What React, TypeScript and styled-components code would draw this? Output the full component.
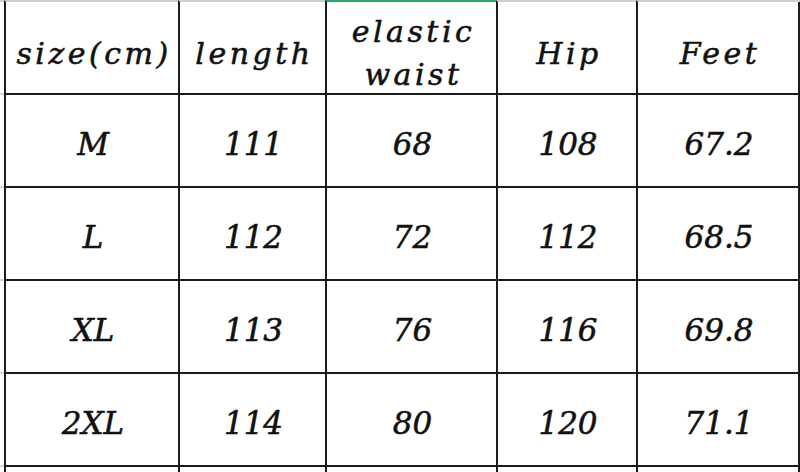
import React from "react";
import styled, { createGlobalStyle } from "styled-components";

const GlobalStyle = createGlobalStyle`
  html, body {
    margin: 0;
    padding: 0;
    background: #ffffff;
    overflow: hidden;
  }
  #root {
    width: 800px;
    height: 472px;
    overflow: hidden;
  }
`;

const COLS = [174, 147, 171, 140, 162];

const Sheet = styled.div`
  display: grid;
  grid-template-columns: 4px ${COLS.map((c) => `${c}px`).join(" ")} 2px;
  grid-template-rows: 95px repeat(4, 93px) 20px;
  width: 800px;
  font-family: "DejaVu Serif", "Liberation Serif", serif;
  font-style: italic;
  font-weight: 400;
  color: #111111;
  -webkit-text-stroke: 0.55px #111111;
`;

const Gutter = styled.div<{ $top?: boolean }>`
  box-sizing: border-box;
  border-top: ${(p) => (p.$top ? "2px solid #cfcfcf" : "none")};
  border-bottom: 2px solid #d6d6d6;
`;

const EdgeCell = styled.div<{ $top?: boolean }>`
  box-sizing: border-box;
  background: #1c1c1c;
  border-top: ${(p) => (p.$top ? "2px solid #cfcfcf" : "none")};
`;

const Cell = styled.div<{ $head?: boolean; $accent?: string }>`
  box-sizing: border-box;
  display: flex;
  align-items: center;
  justify-content: center;
  text-align: center;
  border-left: 2px solid #1c1c1c;
  border-bottom: 2px solid #1c1c1c;
  border-top: ${(p) => (p.$head ? `2px solid ${p.$accent ?? "#cfcfcf"}` : "none")};
  padding: ${(p) => (p.$head ? "11px 2px 0 6px" : "8px 0 0 2px")};
  font-size: ${(p) => (p.$head ? "30px" : "31px")};
  line-height: 43px;
  letter-spacing: ${(p) => (p.$head ? "3.5px" : "0px")};
  white-space: normal;
`;

const PartialCell = styled.div`
  box-sizing: border-box;
  border-left: 2px solid #1c1c1c;
`;

const headers = ["size(cm)", "length", "elastic waist", "Hip", "Feet"];

const rows: string[][] = [
  ["M", "111", "68", "108", "67.2"],
  ["L", "112", "72", "112", "68.5"],
  ["XL", "113", "76", "116", "69.8"],
  ["2XL", "114", "80", "120", "71.1"],
];

export default function App() {
  return (
    <>
      <GlobalStyle />
      <Sheet>
        <Gutter $top />
        {headers.map((h, i) => (
          <Cell key={h} $head $accent={i === 2 ? "#22a867" : undefined}>
            {h}
          </Cell>
        ))}
        <EdgeCell $top />
        {rows.map((r) => (
          <React.Fragment key={r[0]}>
            <Gutter />
            {r.map((v, i) => (
              <Cell key={i}>{v}</Cell>
            ))}
            <EdgeCell />
          </React.Fragment>
        ))}
        <Gutter />
        {COLS.map((_, i) => (
          <PartialCell key={i} />
        ))}
        <EdgeCell />
      </Sheet>
    </>
  );
}
